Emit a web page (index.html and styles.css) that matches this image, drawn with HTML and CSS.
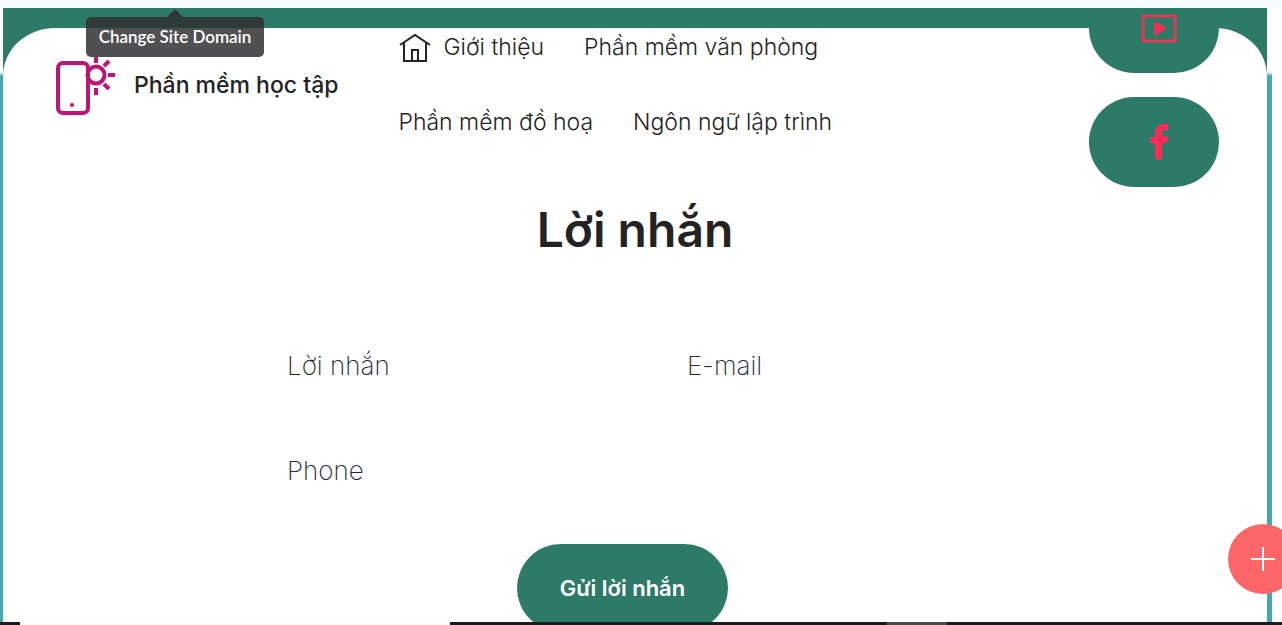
FILE: index.html
```html
<!DOCTYPE html>
<html lang="vi">
<head>
<meta charset="utf-8">
<title>Lời nhắn</title>
<link rel="stylesheet" href="styles.css">
</head>
<body>
<div class="frame">
  <div class="stage">
    <main class="card">
      <header class="header">
        <a class="brand" href="#">
          <svg class="brand-icon" viewBox="0 0 60 60" fill="none" stroke="#bd1478" stroke-width="4" aria-hidden="true">
            <rect x="3" y="8" width="30" height="50" rx="5"/>
            <circle cx="41" cy="20" r="8.5"/>
            <path d="M41 2v6M41 33v7M53 20h7M49 11l5-5M49 29l5 5" stroke-width="4"/>
            <circle cx="17" cy="50" r="2" fill="#bd1478" stroke="none"/>
          </svg>
          <span>Phần mềm học tập</span>
        </a>
        <nav class="nav">
          <a href="#">
            <svg class="home-icon" viewBox="0 0 34 30" fill="none" stroke="#232323" stroke-width="2" aria-hidden="true">
              <path d="M2 13 17 3l15 10M6 11v18h22V11M14 29V18h6v11"/>
            </svg>
            Giới thiệu</a>
          <a href="#">Phần mềm văn phòng</a>
          <a href="#">Phần mềm đồ hoạ</a>
          <a href="#">Ngôn ngữ lập trình</a>
        </nav>
        <div class="social">
          <a href="#" aria-label="YouTube">
            <svg class="social-icon" viewBox="0 0 36 36" aria-hidden="true">
              <rect x="2" y="6" width="32" height="25" fill="none" stroke="#dc3a55" stroke-width="3"/>
              <path d="M13 13q0-2 2-1l9 5q2 1 0 3l-9 5q-2 1-2-1z" fill="#f22f55"/>
            </svg>
          </a>
          <a href="#" aria-label="Facebook">
            <svg class="social-icon" viewBox="0 0 36 36" aria-hidden="true">
              <path d="M27 0v6h-3q-3 0-3 3v3h6l-1 7h-5v15q0 2-3 2t-4-2V19H9v-6h5V9q0-9 9-9z" fill="#ff2d55"/>
            </svg>
          </a>
        </div>
      </header>
      <form class="form">
        <h1>Lời nhắn</h1>
        <div class="fields">
          <input type="text" placeholder="Lời nhắn" aria-label="Lời nhắn">
          <input type="email" placeholder="E-mail" aria-label="E-mail">
          <input type="tel" placeholder="Phone" aria-label="Phone">
        </div>
        <button class="send" type="button">Gửi lời nhắn</button>
      </form>
    </main>
  </div>
</div>
<div class="tooltip" role="tooltip">Change Site Domain</div>
<button class="add" type="button" aria-label="Add">
  <svg viewBox="0 0 24 24" stroke="#fff" stroke-width="2" aria-hidden="true"><path d="M12 0v24M0 12h24"/></svg>
</button>
<div class="taskbar"><span class="search"></span><span class="active"></span></div>
</body>
</html>
```
FILE: styles.css
```css
* { box-sizing: border-box; }

body {
  margin: 0;
  padding-top: 8px;
  height: 100vh;
  overflow: hidden;
  display: flex;
  flex-direction: column;
  background: #f9fafc;
  color: #232323;
  font-family: Inter, "Liberation Sans", sans-serif;
}

a { color: inherit; text-decoration: none; }

.frame {
  flex: 1;
  min-height: 0;
  display: flex;
  padding: 0 15px 0 3px;
  background:
    linear-gradient(#fefefe, #fefefe) right / 10px 100% no-repeat,
    linear-gradient(#fefefe 64px, #46a8ad 68px);
}

.stage {
  flex: 1;
  display: flex;
  padding-top: 20px;
  overflow: hidden;
  background: #2c7a67;
}

.card {
  flex: 1;
  min-width: 0;
  background: #fefefe;
  border-radius: 52px 52px 0 0 / 48px 48px 0 0;
}

.header {
  display: flex;
  align-items: flex-start;
  height: 160px;
  padding: 0 48px 0 52px;
}

.brand {
  display: flex;
  align-items: center;
  gap: 19px;
  margin-top: 27px;
  font-size: 23px;
  font-weight: 500;
  white-space: nowrap;
}

.brand-icon { width: 60px; height: 60px; }

.nav {
  flex: 1;
  display: flex;
  flex-wrap: wrap;
  gap: 45px 40px;
  max-width: 480px;
  margin-left: 60px;
  padding-top: 4px;
  font-size: 23px;
  font-weight: 300;
  line-height: 30px;
}

.nav a { display: flex; align-items: center; gap: 11px; white-space: nowrap; }

.home-icon { width: 34px; height: 30px; }

.social {
  display: grid;
  gap: 24px;
  margin: -45px 0 0 auto;
}

.social a {
  display: flex;
  align-items: center;
  justify-content: center;
  width: 130px;
  height: 90px;
  padding-left: 10px;
  border-radius: 45px;
  background: #2c7a67;
}

.social-icon { width: 36px; height: 36px; }

.form {
  display: flex;
  flex-direction: column;
  align-items: center;
}

h1 {
  margin: 10px 0 72px;
  font-size: 48px;
  font-weight: 600;
  line-height: 64px;
}

.fields {
  display: grid;
  grid-template-columns: 1fr 1fr;
  gap: 43px 40px;
  width: 760px;
  max-width: 100%;
}

.fields input {
  min-width: 0;
  height: 62px;
  padding: 0 32px;
  border: 0;
  background: transparent;
  color: #232323;
  font: 200 26px/32px Inter, "Liberation Sans", sans-serif;
}

.fields input::placeholder { color: #232b33; opacity: 1; }

.send {
  height: 88px;
  margin: 43px 25px 0 0;
  padding: 0 43px;
  border: 0;
  border-radius: 44px;
  background: #2c7a67;
  color: #fff;
  font: 600 22px/30px Inter, "Liberation Sans", sans-serif;
}

.tooltip {
  position: absolute;
  top: 17px;
  left: 86px;
  width: 178px;
  border-radius: 5px;
  background: rgba(46, 46, 49, 0.84);
  color: #fff;
  font: 600 17px/40px Lato, sans-serif;
  text-align: center;
}

.tooltip::before {
  content: "";
  position: absolute;
  bottom: 100%;
  left: 50%;
  margin-left: -8px;
  border: 8px solid transparent;
  border-top: 0;
  border-bottom-color: #2e3838;
}

.add {
  position: fixed;
  right: -16px;
  bottom: 31px;
  display: grid;
  place-items: center;
  width: 70px;
  height: 70px;
  padding: 0;
  border: 0;
  border-radius: 50%;
  background: #ff6668;
}

.add svg { width: 24px; height: 24px; }

.taskbar {
  position: fixed;
  inset: auto 0 0;
  height: 3px;
  background: #1b1b1d;
}

.taskbar span { position: absolute; top: 0; height: 3px; }
.search { left: 20px; width: 430px; background: #fafafa; }
.active { left: 887px; width: 60px; background: #4c4c4c; }
```
